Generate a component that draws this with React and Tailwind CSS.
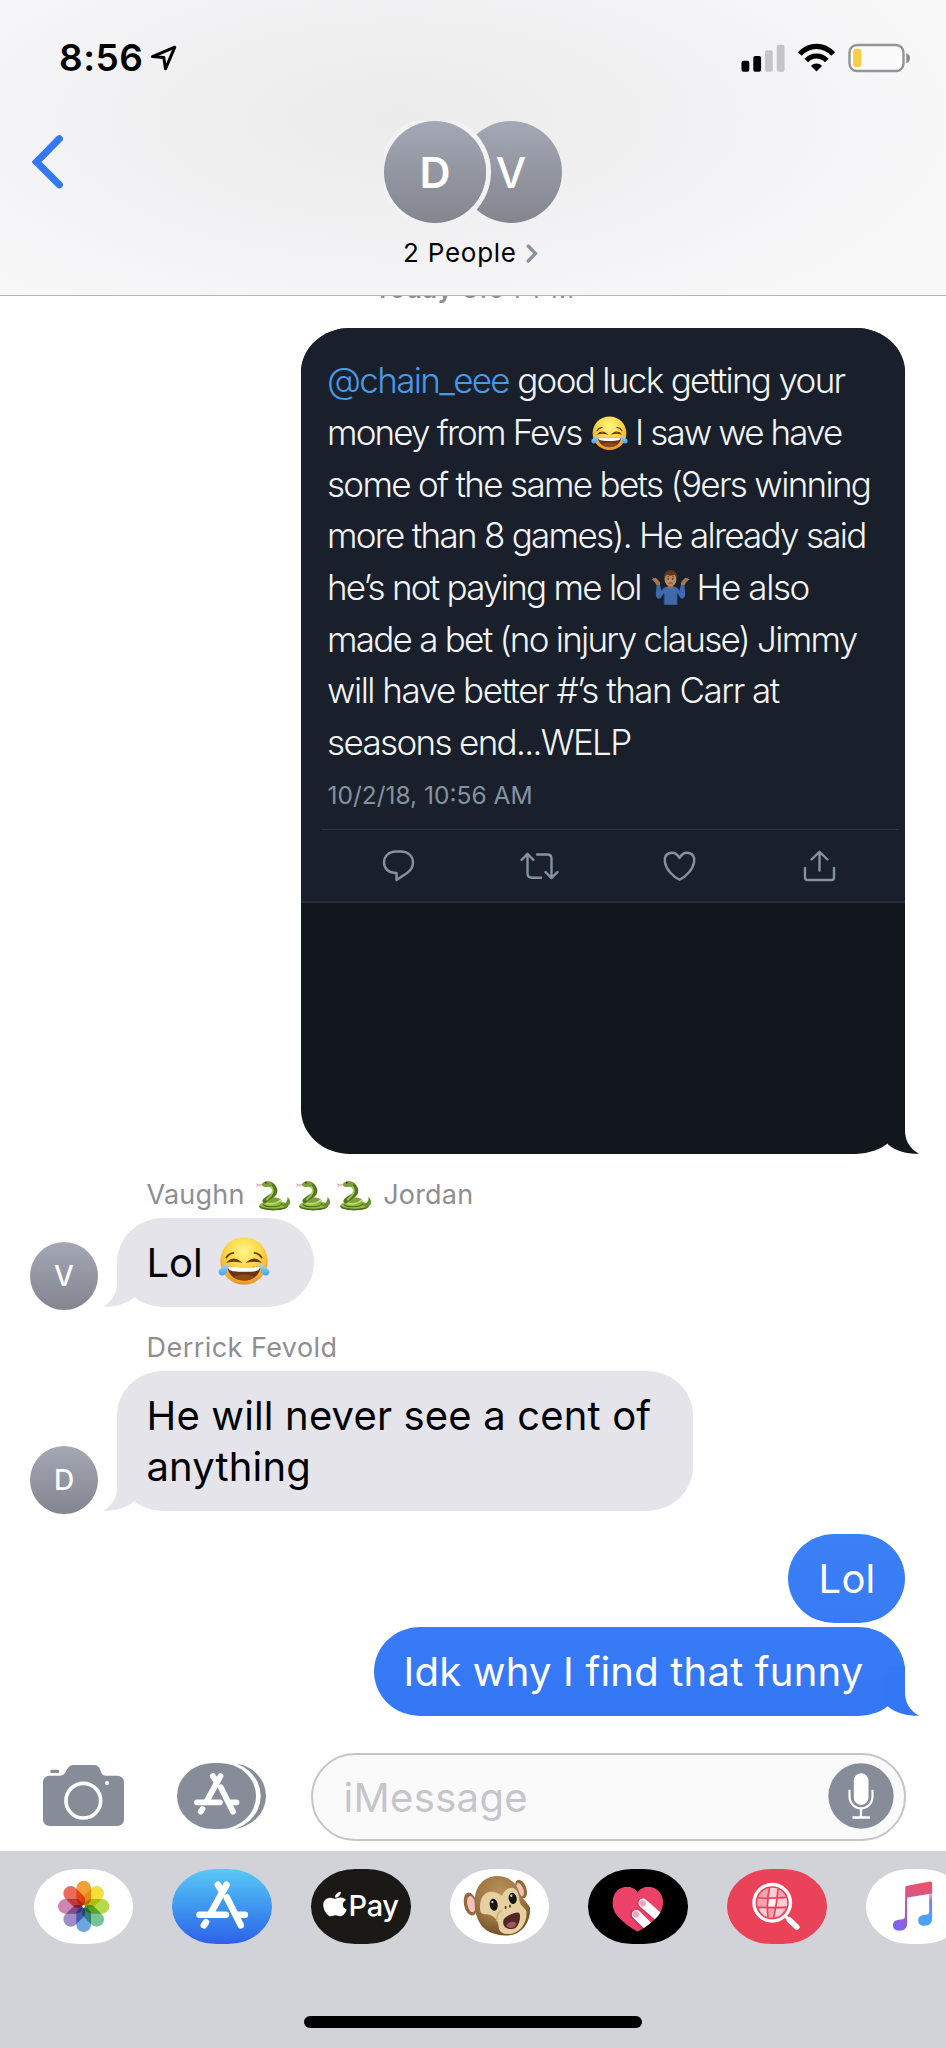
import React from 'react';
import { FaApple } from 'react-icons/fa';

/* ---------- emoji ---------- */

function Joy({ className, id }) {
  return (
    <svg viewBox="0 0 52 48" className={className} role="img" aria-label="😂">
      <defs>
        <radialGradient id={id} cx="0.5" cy="0.3" r="0.72">
          <stop offset="0" stopColor="#fff58a" />
          <stop offset="0.5" stopColor="#fbd744" />
          <stop offset="0.85" stopColor="#f2a72e" />
          <stop offset="1" stopColor="#e28a26" />
        </radialGradient>
        <linearGradient id={id + 't'} x1="0" y1="0" x2="0" y2="1">
          <stop offset="0" stopColor="#a9dcfa" />
          <stop offset="1" stopColor="#3fa3ea" />
        </linearGradient>
      </defs>
      <circle cx="26" cy="24" r="23.7" fill={`url(#${id})`} />
      <g fill="none" stroke="#6b3a10" strokeWidth="1.7" strokeLinecap="round">
        <path d="M8.5 20.5C9.5 18.5 12 16.5 15.5 15.8M43.5 20.5C42.500 18.500 40 16.500 36.500 15.800" />
        <path d="M10.500 24.500C13 21.500 18.500 21.500 21.500 24.500C18 23.600 14 23.600 10.500 24.500Z" />
        <path d="M41.500 24.500C39 21.500 33.500 21.500 30.500 24.500C34 23.600 38 23.600 41.500 24.500Z" />
      </g>
      <path d="M9.500 29.500C20 30.500 32 30.500 42.500 29.500C42 38 35 43.500 26 43.500S10 38 9.500 29.500Z" fill="#6b3410" />
      <path d="M15 40C19 36.500 33 36.500 37 40C31 44.500 21 44.500 15 40Z" fill="#8b4a18" />
      <path d="M10 29.600C20 30.600 32 30.600 42 29.600C42 34 38 34.800 26 34.800S10 34 10 29.600Z" fill="#fff" />
      <path d="M9.500 26.500C10.500 31 9.500 35 7 37.500C4.500 39.500 1 38.500 0.600 35.500C0.300 31.500 5 30.500 9.500 26.500Z" fill={`url(#${id}t)`} />
      <path d="M42.500 26.500C41.500 31 42.500 35 45 37.500C47.500 39.500 51 38.500 51.400 35.500C51.700 31.500 47 30.500 42.500 26.500Z" fill={`url(#${id}t)`} />
    </svg>
  );
}

function Snake() {
  return (
    <svg viewBox="138 6 104 92" className="h-[31px] w-[35px]" role="img" aria-label="🐍">
      <path d="M157 20L145 21L139 17M145 21L140 26" stroke="#e0708a" strokeWidth="2.500" fill="none" />
      <ellipse cx="190" cy="84" rx="43" ry="12" fill="#5c7d22" />
      <ellipse cx="191" cy="80" rx="41" ry="11" fill="#93bf45" />
      <path d="M206 76C222 80 234 72 231 56C243 66 243 84 224 86Z" fill="#6b8f2a" />
      <path d="M158 76C160 88 212 90 216 74" stroke="#4c6b1c" strokeWidth="3" fill="none" />
      <ellipse cx="186" cy="68" rx="28" ry="11" fill="#7ea535" />
      <path d="M162 72C178 80 200 78 212 66" stroke="#c2dd74" strokeWidth="5" fill="none" />
      <path d="M164 68C176 54 206 50 190 26C184 17 176 16 168 18" stroke="#55761f" strokeWidth="14" fill="none" strokeLinecap="round" />
      <path d="M170 64C182 52 196 42 184 26" stroke="#a5c952" strokeWidth="5" fill="none" strokeLinecap="round" />
      <path d="M155 20C157 10 174 6 186 13C190 20 184 27 174 26C165 28 157 26 155 20Z" fill="#7d9f38" />
      <circle cx="167" cy="14" r="2.500" fill="#26330c" />
      <path d="M150 88C170 96 205 96 224 90" stroke="#486319" strokeWidth="3" fill="none" />
    </svg>
  );
}

function Shrug() {
  return (
    <svg viewBox="32 30 116 108" className="h-[36px] w-[39px]" role="img" aria-label="🤷🏽‍♂️">
      <path d="M71 134V98L60 114C52 120 46 112 46 103L48 76L59 75L62 92C68 82 78 79 90 79S112 82 117 92L121 75L132 76L134 103C134 112 128 120 120 114L110 98V134Z" fill="#3e6aab" />
      <path d="M71 134V100M110 134V100" stroke="#2b4b80" strokeWidth="2" />
      <path d="M82 70H98V82C94 87 86 87 82 82Z" fill="#a2704b" />
      <path d="M48 76L44 68L33 57L39 57L35 52L42 55L46 53L58 66L59 75ZM132 76L136 68L147 57L141 57L145 52L138 55L134 53L122 66L121 75Z" fill="#a57450" />
      <ellipse cx="90" cy="57" rx="18" ry="22" fill="#bd895f" />
      <path d="M71 60C67 38 78 31 90 31S113 38 109 60C107 52 106 47 102 44C94 48 84 46 79 44C74 48 73 53 71 60Z" fill="#5a3620" />
      <circle cx="83" cy="57" r="2.400" fill="#2a1a12" />
      <circle cx="97" cy="57" r="2.400" fill="#2a1a12" />
      <path d="M79 51L86 50M94 50L101 51" stroke="#4a2c1a" strokeWidth="2" />
      <path d="M84 71C87 68 93 68 96 71" stroke="#6b3326" strokeWidth="2.500" fill="none" />
    </svg>
  );
}

/* ---------- shared pieces ---------- */

function Avatar({ letter }) {
  return (
    <div className="-mb-[3px] flex size-[68px] shrink-0 items-center justify-center rounded-full bg-linear-to-b from-[#a4a8b5] to-[#83868f] text-[28px] leading-none font-medium text-white">
      {letter}
    </div>
  );
}

function Tail({ className }) {
  return (
    <svg viewBox="0 0 60 60" className={'absolute bottom-0 size-[60px] ' + className} aria-hidden="true">
      <path d="M45 10V36C45 46 49 54 59 59.800C48 60 37 58 28 50.500L20 30L30 10Z" fill="currentColor" />
    </svg>
  );
}

function Received({ letter, name, children, className }) {
  return (
    <div className={className}>
      <div className="flex h-8 items-center pl-[146.500px] text-[27px] leading-8 text-[#8e8e93]">{name}</div>
      <div className="mt-[6.500px] flex items-end pl-[30px]">
        <Avatar letter={letter} />
        <div className="relative ml-[19px] rounded-[46px_/_44.500px] bg-[#e5e4ea] pt-[19.500px] pb-[19px] pl-[29.500px] text-[40px] leading-[51px] text-black">
          <Tail className="-left-[15px] -scale-x-100 text-[#e5e4ea]" />
          {children}
        </div>
      </div>
    </div>
  );
}

function AStrokes() {
  return (
    <g stroke="#fff" strokeWidth="20" strokeLinecap="round" fill="none">
      <path d="M654 465L665 482" />
      <path d="M680 465L634 548" />
      <path d="M599 555H678" />
      <path d="M714 555H735" />
      <path d="M681 503L723 587" />
      <path d="M618 578L612 587" />
    </g>
  );
}

/* ---------- header ---------- */

function StatusBar() {
  return (
    <div className="flex h-[116px] items-center pr-[35px] pl-[59px]">
      <div className="text-[37px] leading-[44px] font-semibold tracking-[0.500px] text-black">8:56</div>
      <svg viewBox="0 0 27 27" className="ml-[7px] h-[27px] w-[27px]" aria-label="Location">
        <path d="M24.300 2L2 11.400L13.300 12.300L15 23.600Z" transform="translate(0.500 0.200)" fill="none" stroke="#000" strokeWidth="3" strokeLinejoin="round" />
      </svg>
      <svg viewBox="741 43 170 30" className="ml-auto h-[30px] w-[170px]" aria-label="Signal, Wi-Fi, battery">
        <rect x="741.500" y="60.700" width="7.800" height="11" rx="2" fill="#000" />
        <rect x="753.300" y="56" width="7.800" height="15.700" rx="2" fill="#000" />
        <rect x="765" y="50.300" width="7.800" height="21.400" rx="2" fill="#c5c5c7" />
        <rect x="776.800" y="44.700" width="7.800" height="27" rx="2" fill="#c5c5c7" />
        <path d="M799.800 54C809.500 43.800 823.500 43.800 833.200 54" fill="none" stroke="#000" strokeWidth="5.200" />
        <path d="M806.200 60.600C812 54.600 821 54.600 826.800 60.600" fill="none" stroke="#000" strokeWidth="5" />
        <path d="M811 66C814.300 62.800 818.700 62.800 822 66L816.500 71.600Z" fill="#000" />
        <rect x="849.500" y="45" width="54" height="26" rx="7.500" fill="#fbfbfc" stroke="#949496" strokeWidth="2.400" />
        <rect x="853.200" y="48.700" width="8.200" height="18.600" rx="3.200" fill="#f6cd45" />
        <path d="M906.300 53.300C911.200 54.500 911.200 61.800 906.300 63Z" fill="#88888a" />
      </svg>
    </div>
  );
}

function Header() {
  return (
    <header className="relative z-10 h-[296px] shrink-0 border-b-[1.500px] border-[#b3b4b6] bg-[#f8f8f9] bg-[radial-gradient(ellipse_560px_230px_at_400px_120px,#ececed_0%,#efeff0_35%,#f4f4f6_70%,#f8f8f9_100%)]">
      <StatusBar />
      <div className="grid grid-cols-[1fr_178px_1fr]">
        <div className="pt-[19px] pl-[32px]">
          <svg viewBox="0 0 32 54" className="h-[54px] w-[32px]" aria-label="Back">
            <path d="M27.300 3.800L4.500 27L27.300 49.700" fill="none" stroke="#3478f6" strokeWidth="7.200" strokeLinecap="round" strokeLinejoin="miter" />
          </svg>
        </div>
        <div className="pt-[5px]">
          <div className="flex">
            <div className="z-10 flex size-[102px] shrink-0 items-center justify-center rounded-full bg-linear-to-b from-[#a4a8b5] to-[#83868f] text-[43px] leading-none font-semibold text-white ring-[5px] ring-[#f2f2f5] [clip-path:inset(0_-5px_0_0)]">
              D
            </div>
            <div className="-ml-[26px] flex size-[102px] shrink-0 items-center justify-center rounded-full bg-linear-to-b from-[#a4a8b5] to-[#83868f] text-[43px] leading-none font-medium text-white">
              V
            </div>
          </div>
          <div className="mt-[14px] flex items-center pl-[19px] text-[26px] leading-8 tracking-[0.750px] whitespace-nowrap text-black">
            2 People
            <svg viewBox="0 0 12 19" className="mt-[1px] ml-[9px] h-[19px] w-[12px]" aria-hidden="true">
              <path d="M2.200 2L9.500 9.500L2.200 17" fill="none" stroke="#8b919c" strokeWidth="3.300" strokeLinecap="round" />
            </svg>
          </div>
        </div>
      </div>
    </header>
  );
}

/* ---------- tweet attachment ---------- */

function Tweet() {
  return (
    <div className="relative ml-[301px] h-[826px] w-[603.500px] rounded-[49px_/_44.500px] bg-[#12171d] text-[#12171d]">
      <div className="h-[574.500px] rounded-tl-[49px_44.500px] rounded-tr-[49px_44.500px] border-b-2 border-[#262f3a] bg-[#19202b] pt-[27.300px]">
        <div className="pl-[26px] text-[35px] leading-[51.660px] font-light whitespace-nowrap text-[#f2f4f6]">
          <div className="tracking-[-1.670px]">
            <span className="text-[#4a99e3]">@chain_eee</span> good luck getting your
          </div>
          <div className="flex items-center tracking-[-1.850px]">
            <span className="w-[264px]">money from Fevs</span>
            <Joy id="joyA" className="h-[34.500px] w-[37px]" />
            <span className="ml-[7px] tracking-[-1.900px]">I saw we have</span>
          </div>
          <div className="tracking-[-1.690px]">some of the same bets (9ers winning</div>
          <div className="tracking-[-1.720px]">more than 8 games). He already said</div>
          <div className="flex items-center tracking-[-1.760px]">
            <span className="w-[324px]">he’s not paying me lol</span>
            <Shrug />
            <span className="ml-[6.500px] tracking-[-1.400px]">He also</span>
          </div>
          <div className="tracking-[-1.750px]">made a bet (no injury clause) Jimmy</div>
          <div className="tracking-[-1.500px]">will have better #’s than Carr at</div>
          <div className="tracking-[-1.650px]">seasons end...WELP</div>
        </div>
        <div className="mt-[11.500px] pl-[26.500px] text-[24.500px] leading-[30px] text-[#8492a0]">10/2/18, 10:56 AM</div>
        <div className="mt-[19px] ml-[20px] w-[578px] border-t-[1.500px] border-[#2b343f]" />
        <svg viewBox="301 845 600 42" className="mt-[15px] h-[42px] w-[600px]" aria-label="Reply, retweet, like, share">
          <g fill="none" stroke="#8492a0" strokeWidth="2.400" strokeLinecap="round" strokeLinejoin="round">
            <path d="M396 851.500H401C408.500 851.500 413 856.500 413 862.500C413 867.500 410.500 870.500 407 873L396.500 880V873C388.500 873 384 868.500 384 862.500C384 856.500 388.500 851.500 396 851.500Z" />
            <path d="M521.500 860L527.500 853.800L533.500 860M527.500 854V873C527.500 876 529 877.700 532 877.700H541M537 854.500H547.500C550.200 854.500 551.500 856 551.500 858.700V877.500M545.500 872L551.500 878.200L557.500 872" />
            <path d="M679.500 858C677 853.500 673 852.200 670 853C665.500 854 664.300 858 664.900 862C666 869.500 673 876.500 679.500 879.800C686 876.500 693 869.500 694.100 862C694.700 858 693.500 854 689 853C686 852.200 682 853.500 679.500 858Z" />
            <path d="M819.500 870.500V852M811.500 859.500L819.500 851.800L827.500 859.500M805 868V877.500C805 879 806 880 807.500 880H831.500C833 880 834 879 834 877.500V868" />
          </g>
        </svg>
      </div>
      <Tail className="-right-[15px] text-[#12171d]" />
    </div>
  );
}

/* ---------- composer ---------- */

function Composer() {
  return (
    <div className="flex h-[98px] shrink-0 items-start pl-[43px]">
      <svg viewBox="129 105 243 183" className="mt-[12px] h-[61px] w-[81px]" aria-label="Camera">
        <rect x="151" y="119" width="26" height="10" rx="3" fill="#878d98" />
        <path d="M149 137H178C205 137 195 105 221 105H281C308 105 296 137 318 137H351C364 137 372 145 372 157V268C372 280 364 288 351 288H149C137 288 129 280 129 268V157C129 145 137 137 149 137Z" fill="#878d98" />
        <circle cx="250" cy="212" r="52" fill="none" stroke="#fff" strokeWidth="11" />
        <circle cx="321" cy="159" r="6" fill="#fff" />
      </svg>
      <svg viewBox="531 98 267 198" className="mt-[10px] ml-[53px] h-[66px] w-[89px]" aria-label="Apps">
        <rect x="570" y="98" width="228" height="198" rx="106" ry="99" fill="#878d98" />
        <rect x="525" y="92" width="257" height="210" rx="115" ry="105" fill="#fff" />
        <rect x="531" y="98" width="237" height="198" rx="108" ry="99" fill="#878d98" />
        <g transform="translate(68.500 -268) scale(0.872)">
          <AStrokes />
        </g>
      </svg>
      <div className="ml-[44.500px] flex h-[88px] w-[595px] items-center justify-between rounded-full border-[2.500px] border-[#c5c5ca] bg-[#fafafb] pr-[10px] pl-[31px]">
        <span className="text-[40px] leading-[51px] tracking-[0.350px] text-[#c5c5ca]">iMessage</span>
        <svg viewBox="1064 98 197 198" className="-mt-[3px] size-[66px]" aria-label="Dictate">
          <circle cx="1162.500" cy="197" r="98" fill="#878d98" />
          <rect x="1141" y="129" width="44" height="95" rx="22" fill="#fff" />
          <path d="M1128 178V197C1128 246 1197 246 1197 197V178" fill="none" stroke="#fff" strokeWidth="6.500" />
          <path d="M1162.500 234V261M1137 261.500H1189" stroke="#fff" strokeWidth="7" />
        </svg>
      </div>
    </div>
  );
}

/* ---------- app drawer ---------- */

const PILL = 'h-[74.500px] w-[99.700px] shrink-0 overflow-hidden rounded-[44px_/_37.250px] ';

const petals = ['#f2a03a', '#f5dd3b', '#b7d84a', '#74c494', '#6da5df', '#a08cc8', '#cf86b2', '#ec6a5c'];

function Drawer() {
  return (
    <footer className="flex h-[197px] shrink-0 flex-col items-center overflow-hidden bg-[#d2d3d9]">
      <div className="flex w-full gap-[39px] pt-[18px] pl-[33.700px]">
        <div className={PILL + 'bg-white'}>
          <svg viewBox="101 418 299 223" className="size-full isolate" aria-label="Photos">
            {petals.map((c, i) => (
              <rect key={c} x="228" y="453" width="44" height="75" rx="22" fill={c} transform={`rotate(${i * 45} 250 530)`} className="mix-blend-multiply" />
            ))}
            <circle cx="250" cy="530" r="4" fill="#fff" />
          </svg>
        </div>
        <div className={PILL + 'bg-linear-to-b from-[#5bc8f5] to-[#3060e8]'}>
          <svg viewBox="516 418 300 223" className="size-full" aria-label="App Store">
            <AStrokes />
          </svg>
        </div>
        <div className={PILL + 'flex items-center bg-[#1a1916] pl-[11.500px] text-white'}>
          <FaApple className="-mt-[5px] h-[28px] w-[24px]" preserveAspectRatio="none" />
          <span className="ml-[2px] text-[29px] leading-[36px] font-medium tracking-[-0.400px]">Pay</span>
        </div>
        <div className={PILL + 'bg-white'}>
          <svg viewBox="14 12 299 223" className="size-full" aria-label="Animoji">
            <defs>
              <radialGradient id="fur" cx="0.45" cy="0.3" r="0.75">
                <stop offset="0" stopColor="#b9935a" />
                <stop offset="0.600" stopColor="#9a7340" />
                <stop offset="1" stopColor="#6b4a24" />
              </radialGradient>
            </defs>
            <ellipse cx="75" cy="117" rx="19" ry="35" fill="#94693e" transform="rotate(-12 75 117)" />
            <ellipse cx="78" cy="117" rx="12" ry="25" fill="#f2c3bd" transform="rotate(-12 78 117)" />
            <ellipse cx="227" cy="72" rx="16" ry="29" fill="#94693e" transform="rotate(-20 227 72)" />
            <ellipse cx="224" cy="74" rx="10" ry="21" fill="#eec0b8" transform="rotate(-20 224 74)" />
            <path d="M88 116C86 62 118 33 156 33C192 33 214 55 222 82C228 98 244 108 254 128C257 165 234 204 196 210C160 214 118 206 100 168C92 150 88 134 88 116Z" fill="url(#fur)" />
            <path d="M105 138C100 104 114 82 136 80C148 79 160 86 170 92C176 76 190 66 202 68C216 72 222 90 222 106C224 122 236 124 243 138C246 166 232 198 200 206C176 210 160 202 160 184C158 166 150 156 134 150C120 146 108 150 105 138Z" fill="#e6d0a0" />
            <path d="M154 168C153 152 160 140 168 136" fill="none" stroke="#cdb07a" strokeWidth="5" />
            <ellipse cx="145" cy="119" rx="12" ry="18" fill="#181614" transform="rotate(-10 145 119)" />
            <ellipse cx="202" cy="100" rx="12" ry="17" fill="#181614" transform="rotate(-10 202 100)" />
            <circle cx="141" cy="111" r="3.500" fill="#d8d8d8" />
            <circle cx="198" cy="92" r="3.500" fill="#d8d8d8" />
            <ellipse cx="181" cy="127" rx="3" ry="5" fill="#5d4326" />
            <ellipse cx="194" cy="123" rx="3" ry="5" fill="#5d4326" />
            <path d="M176 162C180 154 210 140 220 143C228 148 224 176 212 187C200 196 182 192 176 182C172 174 173 168 176 162Z" fill="#522627" />
            <path d="M183 182C188 170 206 166 214 176C208 190 192 194 183 182Z" fill="#9a5a5c" />
          </svg>
        </div>
        <div className={PILL + 'bg-black'}>
          <svg viewBox="430 12 299 223" className="size-full" aria-label="Digital Touch">
            <defs>
              <clipPath id="heartClip">
                <path d="M579 82C592 62 620 60 640 76C660 94 660 126 642 150C626 170 602 187 579 200C556 187 532 170 516 150C498 126 500 94 518 76C538 60 566 62 579 82Z" />
              </clipPath>
            </defs>
            <g clipPath="url(#heartClip)">
              <rect x="500" y="60" width="160" height="145" fill="#ec4168" />
              <g strokeLinecap="round" strokeWidth="27">
                <path d="M571 149L640 220M592 114L670 185" stroke="#c22d51" strokeWidth="31" opacity="0.500" />
                <path d="M575 148L640 212M595 114L670 180" stroke="#fff" />
              </g>
              <ellipse cx="574" cy="148" rx="9" ry="10" fill="#f2a3b8" transform="rotate(-45 574 148)" />
              <ellipse cx="594" cy="115" rx="9" ry="10" fill="#f2a3b8" transform="rotate(-45 594 115)" />
            </g>
          </svg>
        </div>
        <div className={PILL + 'bg-[#ea4359]'}>
          <svg viewBox="762 418 300 223" className="size-full" aria-label="Images">
            <defs>
              <clipPath id="lens">
                <circle cx="898" cy="519" r="45" />
              </clipPath>
            </defs>
            <g clipPath="url(#lens)">
              <rect x="850" y="470" width="96" height="98" fill="#f5a3ae" />
              <path d="M891 474H914L912 502H889ZM912 506H945V530H909ZM862 532H884L882 560H862ZM908 536H935L920 560H904Z" fill="#fbcfd5" />
              <path d="M889 506H910L907 530H886Z" fill="#fff" />
              <path d="M852 504C880 506 915 506 946 502M852 532C880 534 915 534 946 532M890 472C884 500 882 540 886 566M916 472C914 500 908 540 902 566" fill="none" stroke="#ea4359" strokeWidth="5" />
            </g>
            <circle cx="898" cy="519" r="55" fill="none" stroke="#fff" strokeWidth="10" />
            <path d="M938 560L972 592" stroke="#fff" strokeWidth="9" />
            <path d="M950 571L972 592" stroke="#fff" strokeWidth="17" strokeLinecap="round" />
          </svg>
        </div>
        <div className={PILL + 'bg-white'}>
          <svg viewBox="1179 418 300 223" className="size-full" aria-label="Music">
            <defs>
              <linearGradient id="noteL" gradientUnits="userSpaceOnUse" x1="1320" y1="455" x2="1285" y2="600">
                <stop offset="0" stopColor="#e9536b" />
                <stop offset="0.350" stopColor="#d4578f" />
                <stop offset="1" stopColor="#7a62f6" />
              </linearGradient>
              <linearGradient id="noteR" gradientUnits="userSpaceOnUse" x1="0" y1="470" x2="0" y2="560">
                <stop offset="0" stopColor="#e05575" stopOpacity="0" />
                <stop offset="0.500" stopColor="#8a7fd0" />
                <stop offset="1" stopColor="#4da0f4" />
              </linearGradient>
            </defs>
            <path d="M1297 476C1297 471 1299 469 1303 468L1371 455C1376 454 1378 456 1378 461V491L1303 503V580C1303 596 1294 603 1279 603C1266 603 1260 596 1260 587C1260 575 1268 570 1283 569C1292 568 1296 567 1296 560Z" fill="url(#noteL)" />
            <path d="M1369 480H1378V565C1378 581 1370 588 1355 588C1342 588 1336 582 1336 573C1336 561 1344 556 1358 555C1366 554 1369 552 1369 546Z" fill="url(#noteR)" />
          </svg>
        </div>
      </div>
      <div className="mt-[72px] h-[12.500px] w-[338px] shrink-0 rounded-full bg-black" />
    </footer>
  );
}

export default function App() {
  return (
    <div className="flex h-[2048px] w-[946px] flex-col overflow-hidden bg-white font-['Inter','Liberation_Sans',sans-serif]">
      <Header />
      <main className="h-[1457px] shrink-0">
        <div className="-mt-[23px] flex h-[32px] items-center justify-center gap-[9px] pl-[4px] text-[25.500px] leading-8 text-[#8e8e93]">
          <b className="font-semibold tracking-[0.700px]">Today</b>
          <span className="tracking-[1.700px]">8:54 PM</span>
        </div>
        <div className="mt-[23px]">
          <Tweet />
        </div>
        <Received
          className="mt-[25px]"
          letter="V"
          name={
            <>
              <span className="mr-[11.500px] tracking-[0.200px]">Vaughn</span>
              <span className="flex gap-[5.300px]">
                <Snake />
                <Snake />
                <Snake />
              </span>
              <span className="ml-[11.500px] tracking-[0.200px]">Jordan</span>
            </>
          }
        >
          <div className="flex w-[167.500px] items-center">
            <span className="w-[71px]">Lol</span>
            <Joy id="joyB" className="-mt-[3px] h-[48px] w-[52px]" />
          </div>
        </Received>
        <Received className="mt-[25px]" letter="D" name={<span className="tracking-[0.450px]">Derrick Fevold</span>}>
          <p className="w-[546px] tracking-[0.160px]">
            He will never see a cent of
            <br />
            anything
          </p>
        </Received>
        <div className="mt-[22.500px] flex flex-col items-end gap-[3.500px] pr-[41px] text-[40px] leading-[51px] whitespace-nowrap text-white">
          <div className="rounded-[46px_/_44.500px] bg-linear-to-b from-[#3b80f7] to-[#387bf6] pt-[19.500px] pr-[29.500px] pb-[19px] pl-[31px]">
            <span className="tracking-[0.200px]">Lol</span>
          </div>
          <div className="relative w-[531.500px] rounded-[46px_/_44.500px] bg-linear-to-b from-[#387bf6] to-[#3477f5] pt-[19.500px] pb-[19px] pl-[30px]">
            <Tail className="-right-[15px] text-[#3477f5]" />
            <span className="relative tracking-[0.200px]">Idk why I find that funny</span>
          </div>
        </div>
      </main>
      <Composer />
      <Drawer />
    </div>
  );
}
